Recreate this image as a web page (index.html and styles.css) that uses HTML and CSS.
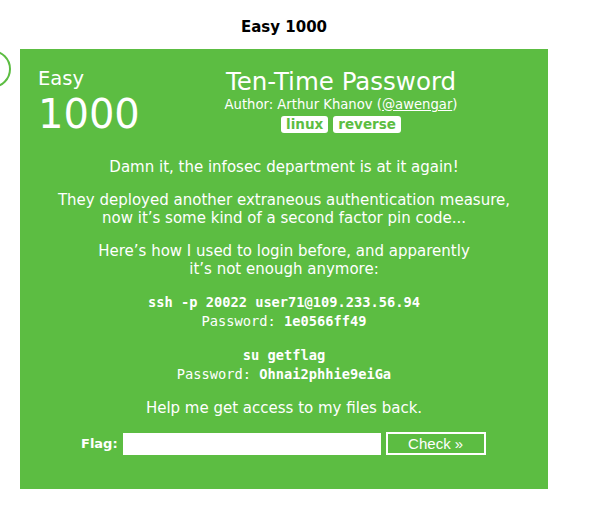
FILE: index.html
```html
<!DOCTYPE html>
<html>
<head>
<meta charset="utf-8">
<link rel="stylesheet" href="styles.css">
</head>
<body>
<div class="ring"></div>
<div class="page">
<h1 class="page-title">Easy 1000</h1>
<div class="card">
  <div class="card-head">
    <div class="level">
      <div class="level-name">Easy</div>
      <div class="level-points">1000</div>
    </div>
    <div class="task-info">
      <div class="task-title">Ten-Time Password</div>
      <div class="task-author">Author: Arthur Khanov (<a href="#">@awengar</a>)</div>
      <div class="tags"><span class="tag">linux</span><span class="tag">reverse</span></div>
    </div>
  </div>
  <div class="card-body">
    <p>Damn it, the infosec department is at it again!</p>
    <p>They deployed another extraneous authentication measure,<br>now it’s some kind of a second factor pin code...</p>
    <p>Here’s how I used to login before, and apparently<br>it’s not enough anymore:</p>
    <p class="code"><b>ssh -p 20022 user71@109.233.56.94</b><br>Password: <b>1e0566ff49</b></p>
    <p class="code"><b>su getflag</b><br>Password: <b>Ohnai2phhie9eiGa</b></p>
    <p>Help me get access to my files back.</p>
  </div>
  <form class="flag-form">
    <label class="flag-label">Flag:</label>
    <input class="flag-input" type="text">
    <button class="flag-btn" type="button">Check »</button>
  </form>
</div>
</div>
</body>
</html>
```
FILE: styles.css
```css
body {
  margin: 0;
  font-family: "DejaVu Sans", Verdana, sans-serif;
  background: #fff;
  position: relative;
}
.ring {
  position: absolute;
  left: -27px;
  top: 50px;
  width: 34px;
  height: 34px;
  border: 2px solid #5cbd42;
  border-radius: 50%;
}
.page {
  margin-left: 20px;
  width: 528px;
}
.page-title {
  margin: 0;
  padding-top: 18px;
  height: 31px;
  text-align: center;
  font-size: 15px;
  font-weight: bold;
  color: #000;
}
.card {
  height: 440px;
  background: #5cbd42;
  color: #fff;
  box-sizing: border-box;
}
.card-head {
  display: flex;
  padding-top: 18px;
}
.level {
  width: 114px;
  padding-left: 18px;
  box-sizing: border-box;
}
.level-name {
  font-size: 19.5px;
  line-height: 24px;
}
.level-points {
  font-size: 40px;
  line-height: 46px;
}
.task-info {
  flex: 1;
  text-align: center;
}
.task-title {
  font-size: 24.5px;
  line-height: 30px;
}
.task-author {
  font-size: 13.2px;
  line-height: 16px;
}
.task-author a {
  color: #fff;
}
.tags {
  display: flex;
  justify-content: center;
  gap: 5px;
  margin-top: 3px;
}
.tag {
  background: #fff;
  color: #5cbd42;
  font-weight: bold;
  font-size: 13.5px;
  line-height: 17px;
  padding: 0 5px;
  border-radius: 3px;
}
.card-body {
  text-align: center;
  font-size: 15px;
  line-height: 18px;
  padding-top: 21px;
}
.card-body p {
  margin: 0 0 15px;
}
.card-body .code {
  font-family: "DejaVu Sans Mono", "Liberation Mono", monospace;
  font-size: 13.7px;
  line-height: 19px;
  margin-bottom: 15px;
}
.flag-form {
  display: flex;
  align-items: center;
  padding-left: 61px;
  margin-top: 10px;
}
.flag-label {
  font-weight: bold;
  font-size: 13px;
  margin-right: 5px;
}
.flag-input {
  width: 258px;
  height: 22px;
  border: none;
  padding: 0;
  margin: 0;
  box-sizing: border-box;
}
.flag-btn {
  margin-left: 5px;
  width: 100px;
  height: 23px;
  box-sizing: border-box;
  background: #5cbd42;
  border: 2px solid #fff;
  color: #fff;
  font-family: "Liberation Sans", Arial, sans-serif;
  font-size: 15px;
  padding: 0;
  line-height: 16px;
}
```
